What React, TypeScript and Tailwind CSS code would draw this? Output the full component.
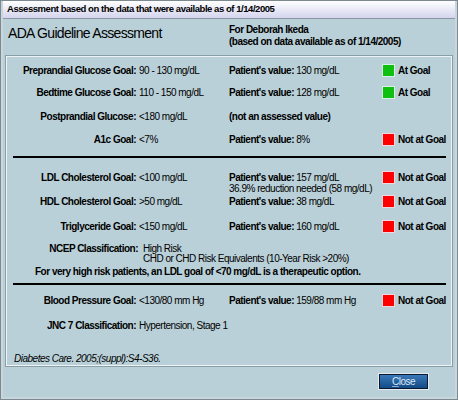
type Status = "ok" | "bad" | null;

function Indicator({ status }: { status: Status }) {
  if (!status) return <div />;
  return (
    <div className="flex h-[11px] items-center">
      <div
        className={
          status === "ok"
            ? "h-[13px] w-[13px] border border-[#d8f0e8] bg-[#10c010]"
            : "h-[13px] w-[13px] border border-[#f0d8e0] bg-[#ff0000]"
        }
      />
    </div>
  );
}

function Row({
  label,
  goal,
  value,
  extra,
  status,
  className,
}: {
  label: string;
  goal: string;
  value?: string;
  extra?: string;
  status: Status;
  className?: string;
}) {
  return (
    <div className={"grid grid-cols-[129px_93px_153px_16px_1fr] leading-[11px] " + (className ?? "")}>
      <div className="text-right font-bold">{label}</div>
      <div className="pl-[3px] whitespace-nowrap">{goal}</div>
      <div className="whitespace-nowrap">
        {value === undefined ? (
          <span className="font-bold">(not an assessed value)</span>
        ) : (
          <>
            <span className="font-bold">Patient&apos;s value:</span> {value}
            {extra && <div>{extra}</div>}
          </>
        )}
      </div>
      <Indicator status={status} />
      <div className="whitespace-nowrap font-bold">
        {status === "ok" ? "At Goal" : status === "bad" ? "Not at Goal" : ""}
      </div>
    </div>
  );
}

export default function App() {
  return (
    <div className="h-[400px] w-[458px] border border-[#7d8990] bg-[#bad0d8] font-['Liberation_Sans',Arial,sans-serif] text-[10px] tracking-[-0.5px] text-black">
      <div className="flex h-full flex-col border-2 border-t-0 border-[#c9d7dd]">
        {/* title bar */}
        <div className="flex h-[18px] shrink-0 items-center border-b border-[#8c96a4] bg-gradient-to-b from-white to-[#d4d4ee] pl-[4px] text-[9.5px] font-bold tracking-[-0.45px]">
          Assessment based on the data that were available as of 1/14/2005
        </div>

        {/* header */}
        <div className="flex h-[36px] shrink-0">
          <div className="w-[226px] pl-[5px] pt-[6px] text-[14px] leading-[16px] tracking-[-0.7px]">
            ADA Guideline Assessment
          </div>
          <div className="pt-[5px] font-bold leading-[12px]">
            <div>For Deborah Ikeda</div>
            <div>(based on data available as of 1/14/2005)</div>
          </div>
        </div>

        {/* panel */}
        <div className="mx-[2px] border border-[#8a9ea6]">
          <div className="border border-[#eef4f6] pb-px">
            <Row className="mt-[8px]" label="Preprandial Glucose Goal:" goal="90 - 130 mg/dL" value="130 mg/dL" status="ok" />
            <Row className="mt-[11px]" label="Bedtime Glucose Goal:" goal="110 - 150 mg/dL" value="128 mg/dL" status="ok" />
            <Row className="mt-[13px]" label="Postprandial Glucose:" goal="<180 mg/dL" status={null} />
            <Row className="mt-[12px]" label="A1c Goal:" goal="<7%" value="8%" status="bad" />

            <div className="ml-[6px] mr-[5px] mt-[11px] h-[2px] bg-black" />

            <Row
              className="mt-[14px]"
              label="LDL Cholesterol Goal:"
              goal="<100 mg/dL"
              value="157 mg/dL"
              extra="36.9% reduction needed (58 mg/dL)"
              status="bad"
            />
            <Row className="mt-[2px]" label="HDL Cholesterol Goal:" goal=">50 mg/dL" value="38 mg/dL" status="bad" />
            <Row className="mt-[14px]" label="Triglyceride Goal:" goal="<150 mg/dL" value="160 mg/dL" status="bad" />

            <div className="mt-[12px] grid grid-cols-[131px_1fr] leading-[10px]">
              <div className="text-right font-bold">NCEP Classification:</div>
              <div className="pl-[5px]">
                <div>High Risk</div>
                <div>CHD or CHD Risk Equivalents (10-Year Risk &gt;20%)</div>
              </div>
            </div>
            <div className="mt-[2px] pl-[28px] font-bold leading-[11px]">
              For very high risk patients, an LDL goal of &lt;70 mg/dL is a therapeutic option.
            </div>

            <div className="ml-[6px] mr-[5px] mt-[6px] h-[2px] bg-black" />

            <Row className="mt-[10px]" label="Blood Pressure Goal:" goal="<130/80 mm Hg" value="159/88 mm Hg" status="bad" />

            <div className="mt-[14px] grid grid-cols-[129px_1fr] leading-[11px]">
              <div className="text-right font-bold">JNC 7 Classification:</div>
              <div className="pl-[3px]">Hypertension, Stage 1</div>
            </div>

            <div className="ml-[7px] mt-[22px] italic leading-[11px]">Diabetes Care. 2005;(suppl):S4-S36.</div>
          </div>
        </div>

        {/* footer */}
        <div className="mt-[6px] flex justify-end pr-[26px]">
          <div className="border border-[#e4ecf2]">
            <button className="flex h-[15px] w-[49px] items-center justify-center border border-[#0c1a30] bg-gradient-to-b from-[#3a78b8] to-[#124a86] text-[10px] leading-none text-[#dce8f4]">
              <span className="underline decoration-[#dce8f4]/60">C</span>lose
            </button>
          </div>
        </div>
      </div>
    </div>
  );
}
